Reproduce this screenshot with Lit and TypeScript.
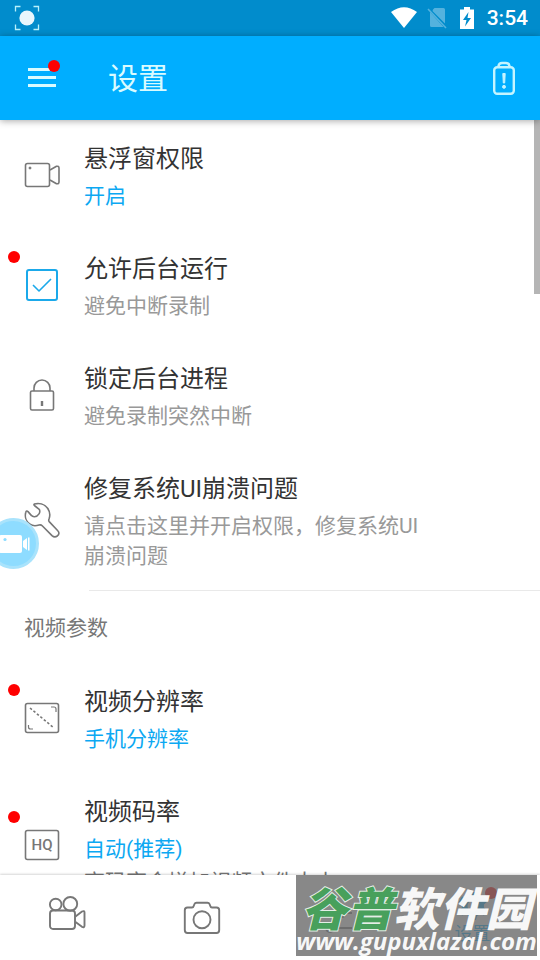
import { LitElement, html, css, svg, nothing, TemplateResult } from "lit";
import { customElement, property, state } from "lit/decorators.js";
import { classMap } from "lit/directives/class-map.js";

const camcorder = svg`
  <rect x="1.5" y="6.5" width="24" height="23" rx="2" />
  <circle cx="6" cy="11" r="1" fill="currentColor" stroke-width="1" />
  <path d="M26 13 32.5 9.3Q35 8.8 35 11v14Q35 27.2 32.5 26.7L26 23" />`;

const tick = svg`<path d="M9 18l6 6 12-12" />`;

const lock = svg`
  <rect x="6.5" y="14" width="23" height="19" rx="1.5" />
  <path d="M10 14v-3a8 8 0 0 1 16 0v3" />
  <path d="M18 24v5" stroke-width="2.4" />`;

const wrench = svg`
  <path d="M10.3 2C9.5 2.7 10.3 3.5 11 4L15.2 7.3C16 8 16 10.5 15.2 11.6
    C14 13.5 12.3 14.6 10.6 14.7C9.4 14.8 8.3 14.6 7.5 13.6L4 9.6
    C3.2 8.8 2.2 8.7 1.8 10.3C.6 14.5 2 19.5 6 22.2C9.5 24.6 12.5 23.8 15 23
    C16.4 22.6 17.3 22.8 18.2 23.7L28 33.6C29.6 35.1 31.6 35.3 33.3 34
    C35.3 32.3 35.4 30.4 33.8 28.8L25.2 19.6C24.5 18.8 24.6 18 25 17
    C26.3 13.5 26 9.6 23.6 6.2C20.4 1.8 14.8 .8 10.3 2Z" />`;

const resolution = svg`
  <rect x="1.5" y="3.5" width="33" height="29" rx="2" />
  <path d="M6 8l24 20" stroke-dasharray="2.5 2" />
  <path d="M27 7h3q2 0 2 2v3M4.5 25v2q0 2 2 2h2.5" stroke-width="1.2" />`;

const frame = svg`<rect x="1.5" y="3.5" width="33" height="29" rx="2" />`;

interface Row {
  id: string;
  title: string;
  note?: string;
  value?: string;
  icon: TemplateResult;
  tag?: string;
  fresh?: boolean;
  toggle?: boolean;
}

const general: Row[] = [
  { id: "float", title: "悬浮窗权限", value: "开启", icon: camcorder },
  { id: "background", title: "允许后台运行", note: "避免中断录制", icon: tick, fresh: true, toggle: true },
  { id: "lock", title: "锁定后台进程", note: "避免录制突然中断", icon: lock },
  { id: "repair", title: "修复系统UI崩溃问题", note: "请点击这里并开启权限，修复系统UI崩溃问题", icon: wrench },
];

const video: Row[] = [
  { id: "resolution", title: "视频分辨率", value: "手机分辨率", icon: resolution, fresh: true },
  { id: "bitrate", title: "视频码率", value: "自动(推荐)", note: "高码率会增加视频文件大小", icon: frame, tag: "HQ", fresh: true },
];

@customElement("setting-row")
export class SettingRow extends LitElement {
  @property({ attribute: false }) row!: Row;
  @state() private on = true;

  static styles = css`
    :host { display: block; }
    .row {
      display: flex;
      align-items: center;
      gap: 24px;
      box-sizing: border-box;
      width: 100%;
      padding: 19px 104px 19px 24px;
      border: 0;
      background: none;
      font: inherit;
      text-align: left;
      cursor: pointer;
    }
    .icon {
      position: relative;
      flex: none;
      display: grid;
      place-items: center;
      width: 36px;
      height: 36px;
      color: #777;
    }
    .icon > * { grid-area: 1 / 1; }
    .icon svg { fill: none; stroke: currentColor; stroke-width: 1.6; stroke-linejoin: round; pointer-events: none; }
    .icon.toggle { color: #1ba9ea; }
    .box {
      appearance: none;
      width: 32px;
      height: 32px;
      margin: 0;
      border: 2px solid #1ba9ea;
      border-radius: 3px;
    }
    .tag { font: 500 15px/20px Roboto, "Liberation Sans", sans-serif; }
    .dot {
      position: absolute;
      left: -16px;
      top: -16px;
      width: 12px;
      height: 12px;
      border-radius: 50%;
      background: #f00;
    }
    .text { display: flex; flex-direction: column; flex: 1; min-width: 0; }
    .title { margin-bottom: 2px; font-size: 24px; line-height: 40px; color: #333; }
    .value { font-size: 21px; line-height: 30px; color: #0ca8f2; }
    .note { font-size: 21px; line-height: 30px; color: #999; }
    .value + .note { margin-top: 3px; color: #777; }
  `;

  render() {
    const r = this.row;
    const picture = html`<svg width="36" height="36" viewBox="0 0 36 36" aria-hidden="true">${r.toggle && !this.on ? nothing : r.icon}</svg>`;
    const body = html`
      <span class=${classMap({ icon: true, toggle: !!r.toggle })}>
        ${r.toggle
          ? html`<input class="box" type="checkbox" id=${r.id} .checked=${this.on}
              @change=${(e: Event) => (this.on = (e.target as HTMLInputElement).checked)} />`
          : nothing}
        ${picture}
        ${r.tag ? html`<span class="tag">${r.tag}</span>` : nothing}
        ${r.fresh ? html`<span class="dot"></span>` : nothing}
      </span>
      <span class="text">
        <span class="title">${r.title}</span>
        ${r.value ? html`<span class="value">${r.value}</span>` : nothing}
        ${r.note ? html`<span class="note">${r.note}</span>` : nothing}
      </span>`;
    return r.toggle
      ? html`<label class="row" for=${r.id}>${body}</label>`
      : html`<button class="row" type="button">${body}</button>`;
  }
}

@customElement("app-root")
export class AppRoot extends LitElement {
  static styles = css`
    :host {
      position: relative;
      display: flex;
      flex-direction: column;
      height: 100vh;
      overflow: hidden;
      background: #fff;
      font-family: Roboto, "Noto Sans CJK SC", sans-serif;
    }
    button { padding: 0; border: 0; background: none; color: inherit; cursor: pointer; }
    svg { display: block; }
    .status {
      flex: none;
      display: flex;
      align-items: center;
      height: 36px;
      padding: 0 12px 0 14px;
      background: #018ccc;
      color: #fff;
    }
    .signals { display: flex; align-items: center; gap: 10px; margin-left: auto; }
    .time { font-size: 21px; line-height: 36px; font-weight: 500; }
    .bar {
      position: relative;
      z-index: 1;
      flex: none;
      display: flex;
      align-items: center;
      height: 84px;
      padding: 0 24px 0 28px;
      background: #00aeff;
      box-shadow: 0 1px 7px rgba(0, 0, 0, 0.35);
      color: #d9fbff;
    }
    .menu { position: relative; }
    .badge {
      position: absolute;
      right: -4px;
      top: -6px;
      width: 12px;
      height: 12px;
      border-radius: 50%;
      background: #f00;
    }
    .heading { flex: 1; margin: 0 0 0 52px; padding-top: 2px; font-size: 30px; line-height: 44px; font-weight: 400; }
    .main { position: relative; flex: 1; min-height: 0; }
    .list { height: 100%; overflow-y: auto; scrollbar-width: none; }
    .section {
      margin: 0;
      padding: 22px 24px 20px;
      font-size: 21px;
      line-height: 30px;
      font-weight: 400;
      color: #777;
    }
    .divider { height: 1px; margin: 0 0 0 89px; border: 0; background: #e9e9e9; }
    .thumb { position: absolute; top: 0; right: 0; width: 6px; height: 23%; background: #b5b5b5; }
    .tabs {
      flex: none;
      display: grid;
      grid-template-columns: repeat(4, 1fr);
      height: 85px;
      background: #fff;
      box-shadow: 0 -1px 2px rgba(0, 0, 0, 0.16);
      z-index: 1;
    }
    .tab { display: flex; flex-direction: column; align-items: center; justify-content: center; color: #777; }
    .tab svg { fill: none; stroke: currentColor; stroke-width: 1.9; stroke-linejoin: round; }
    .tab.active { color: #00aeff; font: 18px/24px Roboto, "Noto Sans CJK SC", sans-serif; }
    .gear { position: relative; }
    .gear svg { stroke: none; }
    .gear .badge { right: -9px; top: -3px; }
    .bubble {
      position: absolute;
      left: -12px;
      top: 518px;
      display: grid;
      place-items: center end;
      box-sizing: border-box;
      width: 51px;
      height: 51px;
      border: 3px solid #a9e3fc;
      border-radius: 50%;
      background: #8edcff;
    }
    .mark {
      position: absolute;
      z-index: 2;
      right: 3px;
      bottom: 4px;
      display: flex;
      flex-direction: column;
      align-items: center;
      width: 241px;
      height: 81px;
      background: rgba(106, 106, 106, 0.8);
      color: rgba(255, 255, 255, 0.94);
      white-space: nowrap;
      pointer-events: none;
    }
    .name { margin-top: 4px; font: italic 900 46px/54px "Noto Sans CJK SC", sans-serif; }
    .green { color: #48a05c; paint-order: stroke fill; -webkit-text-stroke: 2px #e4eee6; }
    .site { margin-top: -4px; font: italic 700 24px/24px "Open Sans", "Noto Sans", sans-serif; }
  `;

  render() {
    return html`
      <div class="status">
        <svg width="26" height="26" viewBox="0 0 26 26" aria-hidden="true">
          <circle cx="13" cy="13" r="7.6" fill="#e8f6fd" />
          <path d="M1.5 6.5V1.5H6.5M19.5 1.5H24.5V6.5M24.5 19.5V24.5H19.5M6.5 24.5H1.5V19.5" fill="none" stroke="#b8f0fb" stroke-width="1.3" />
        </svg>
        <div class="signals">
          <svg width="26" height="22" viewBox="0 0 26 22" aria-hidden="true">
            <path d="M0 5Q13-4.5 26 5L13 21Z" fill="#fff" />
          </svg>
          <svg width="20" height="22" viewBox="0 0 20 22" aria-hidden="true">
            <path d="M6 2.5 7.5 1H16.5Q18 1 18 2.5V16.5L5.5 4ZM3 5 16.5 20H4.5Q3 20 3 18.5Z" fill="#54b2de" />
            <path d="M1 2 19 21" stroke="#54b2de" stroke-width="1.6" />
          </svg>
          <svg width="20" height="22" viewBox="0 0 20 22" aria-hidden="true">
            <path d="M7 0H13V2.5H17V22H3V2.5H7Z" fill="#fff" />
            <path d="M11.5 5 6 13H9.5L8 19.5 14 11H10.5Z" fill="#018ccc" />
          </svg>
          <span class="time">3:54</span>
        </div>
      </div>

      <header class="bar">
        <button class="menu" type="button" aria-label="菜单">
          <svg width="28" height="24" viewBox="0 0 28 24" aria-hidden="true">
            <path d="M0 3.5H28M0 11.5H28M0 19.5H28" stroke="#d9fbff" stroke-width="3" />
          </svg>
          <span class="badge"></span>
        </button>
        <h1 class="heading">设置</h1>
        <button type="button" aria-label="电池">
          <svg width="24" height="36" viewBox="0 0 24 36" fill="none" stroke="#c4f4ff" stroke-width="2.4" aria-hidden="true">
            <rect x="2.2" y="7.2" width="19.6" height="26.6" rx="3" />
            <path d="M6.5 7V6Q7 3 10 3H14Q17 3 17.5 6V7" />
            <path d="M10.8 13.5H13.2L12.7 23H11.3Z" fill="#c4f4ff" stroke-width="1" />
            <circle cx="12" cy="26.8" r="1.5" fill="#c4f4ff" stroke-width="1" />
          </svg>
        </button>
      </header>

      <main class="main">
        <div class="list">
          ${general.map((r) => html`<setting-row .row=${r}></setting-row>`)}
          <hr class="divider" />
          <h2 class="section">视频参数</h2>
          ${video.map((r) => html`<setting-row .row=${r}></setting-row>`)}
        </div>
        <div class="thumb"></div>
      </main>

      <nav class="tabs">
        <button class="tab" type="button" aria-label="视频">
          <svg width="44" height="44" viewBox="0 0 44 44" aria-hidden="true">
            <circle cx="9.7" cy="8.5" r="5.8" />
            <circle cx="24.3" cy="7.9" r="6.9" />
            <rect x="4" y="14.5" width="25" height="18.5" rx="3" />
            <path d="M29.5 20.5 36 15.5Q38.5 14.3 38.5 16.5V29.5Q38.5 32 36 30.8L29.5 26" />
          </svg>
        </button>
        <button class="tab" type="button" aria-label="截图">
          <svg width="44" height="44" viewBox="0 0 44 44" aria-hidden="true">
            <path d="M6.5 11.5H11Q12.3 11.5 12.7 10L13.5 8Q14 6.7 15.500 6.7H26.5Q28 6.7 28.5 8L29.3 10Q29.7 11.5 31 11.5H35.5Q38.2 11.5 38.2 14.2V34Q38.2 37 35.5 37H6.5Q3.8 37 3.8 34V14.2Q3.8 11.5 6.5 11.5Z" />
            <circle cx="21" cy="23.7" r="8.5" />
          </svg>
        </button>
        <button class="tab" type="button" aria-label="编辑">
          <svg width="44" height="44" viewBox="0 0 44 44" aria-hidden="true">
            <path d="M8 17H22M30 17H36M18 32H36" />
            <circle cx="26" cy="17" r="4" />
            <circle cx="14" cy="32" r="4" />
          </svg>
        </button>
        <button class="tab active" type="button" aria-current="page">
          <span class="gear">
            <svg width="30" height="32" viewBox="0 0 30 32" aria-hidden="true">
              <path fill="currentColor" fill-rule="evenodd" d="M12 2H18L19 6 22 7.7 26 6.5 29 11.7 26 14.5V17.5L29 20.3 26 25.5 22 24.3 19 26 18 30H12L11 26 8 24.3 4 25.5 1 20.3 4 17.5V14.5L1 11.7 4 6.5 8 7.7 11 6ZM15 10.5A5.5 5.5 0 1 0 15 21.5 5.5 5.5 0 1 0 15 10.5Z" />
            </svg>
            <span class="badge"></span>
          </span>
          设置
        </button>
      </nav>

      <button class="bubble" type="button" aria-label="录制">
        <svg width="37" height="24" viewBox="0 0 37 24" aria-hidden="true">
          <rect x="0" y="3" width="23" height="18" rx="2" fill="#fff" />
          <circle cx="6" cy="7.5" r="1.6" fill="#8edcff" />
          <path d="M24 9 28 6V18L24 15ZM29 5.5H30.5V18.5H29Z" fill="#fff" />
        </svg>
      </button>

      <div class="mark">
        <span class="name"><span class="green">谷普</span>软件园</span>
        <span class="site">www.gupuxlazal.com</span>
      </div>
    `;
  }
}
